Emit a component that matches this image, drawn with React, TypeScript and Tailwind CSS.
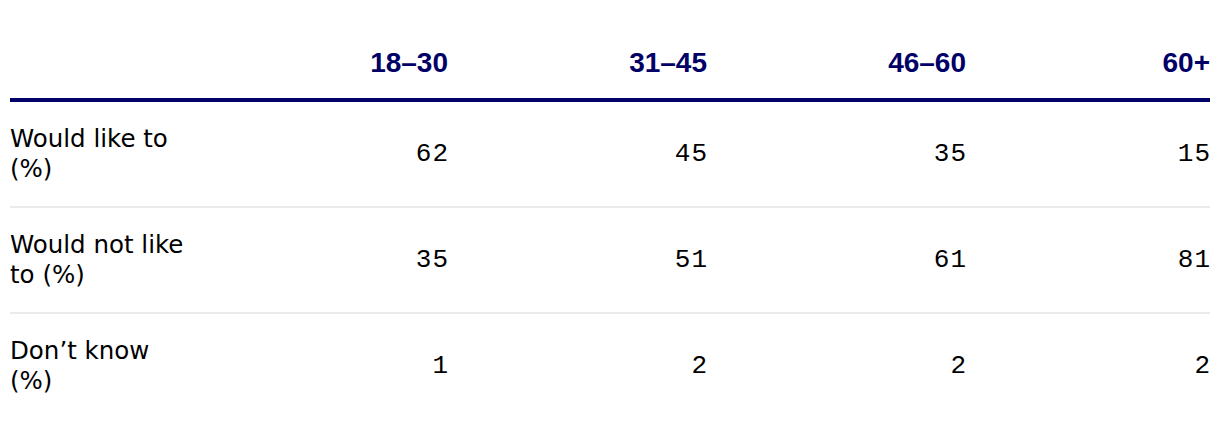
const headers = ['18–30', '31–45', '46–60', '60+']

const rows: { label: string; values: number[] }[] = [
  { label: 'Would like to (%)', values: [62, 45, 35, 15] },
  { label: 'Would not like to (%)', values: [35, 51, 61, 81] },
  { label: 'Don’t know (%)', values: [1, 2, 2, 2] },
]

const cols = 'grid grid-cols-[179px_259px_259px_259px_244px]'

function App(): JSX.Element {
  return (
    <div className="min-h-screen bg-white px-[10px]">
      <div className="w-[1200px]">
        {/* header */}
        <div className={`${cols} border-b-4 border-[#000066] pt-[47px] pb-[19px]`}>
          <div />
          {headers.map((h) => (
            <div
              key={h}
              className="text-right text-[28px] leading-[32px] font-bold text-[#000066] font-['Liberation_Sans',sans-serif]"
            >
              {h}
            </div>
          ))}
        </div>

        {rows.map((row, i) => (
          <div
            key={row.label}
            className={`${cols} items-center py-[22px] ${i < rows.length - 1 ? 'border-b-2 border-[#ebebeb]' : ''}`}
          >
            <div className="text-[24.5px] leading-[30px] text-black font-['DejaVu_Sans',sans-serif]">
              {row.label}
            </div>
            {row.values.map((v, j) => (
              <div
                key={j}
                className="text-right text-[26px] leading-[30px] tracking-[1px] -mr-[1px] text-black font-['Liberation_Mono',monospace]"
              >
                {v}
              </div>
            ))}
          </div>
        ))}
      </div>
    </div>
  )
}

export default App
